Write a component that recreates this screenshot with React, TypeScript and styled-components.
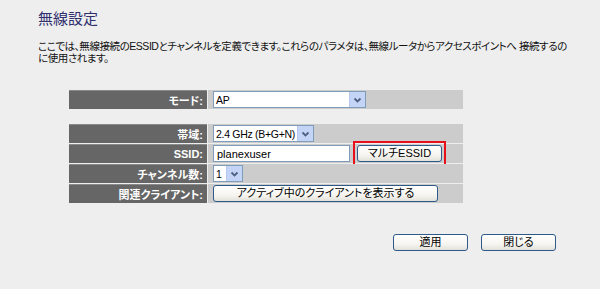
import * as React from "react";
import styled, { createGlobalStyle } from "styled-components";

const GlobalStyle = createGlobalStyle`
  html, body {
    margin: 0;
    padding: 0;
    background: #eeeeee;
  }
  body {
    font-family: "Liberation Sans", "Noto Sans CJK JP", sans-serif;
  }
`;

const jp = `"Liberation Sans", "Noto Sans CJK JP", sans-serif`;

const Page = styled.div`
  width: 600px;
  height: 289px;
  box-sizing: border-box;
  padding: 9px 40px 0 38px;
  overflow: hidden;
`;

const Title = styled.h1`
  margin: 0;
  font-family: ${jp};
  font-size: 15px;
  font-weight: normal;
  line-height: 20px;
  color: #2f2f6e;
`;

const Description = styled.p`
  margin: 11px 0 0;
  font-family: ${jp};
  font-size: 10.5px;
  line-height: 12px;
  color: #111;
  font-feature-settings: "palt";
  letter-spacing: -0.45px;
  white-space: nowrap;
`;

const FormTable = styled.div<{ top: number }>`
  margin: ${(p) => p.top}px 0 0 31px;
  width: 394px;
  display: flex;
  flex-direction: column;
  gap: 1px;
`;

const Row = styled.div`
  display: grid;
  grid-template-columns: 138px 255px;
  column-gap: 1px;
  height: 19px;
`;

const Label = styled.div`
  background: #666666;
  border-top: 1px solid #8a8a8a;
  color: #ffffff;
  font-family: ${jp};
  font-weight: bold;
  font-size: 11px;
  text-align: right;
  padding-right: 4px;
  display: flex;
  align-items: center;
  justify-content: flex-end;
  font-feature-settings: "palt";
`;

const Value = styled.div`
  background: #cccccc;
  display: flex;
  align-items: center;
  padding-left: 5px;
  gap: 7px;
`;

const SelectBox = styled.div<{ w: number }>`
  width: ${(p) => p.w}px;
  height: 17px;
  box-sizing: border-box;
  background: #ffffff;
  border: 1px solid #7f9db9;
  display: flex;
  align-items: center;
  font-family: "Liberation Sans", sans-serif;
  font-size: 10.5px;
  color: #000;
`;

const SelectText = styled.span`
  flex: 1;
  padding-left: 2px;
  letter-spacing: -0.3px;
  white-space: nowrap;
  overflow: hidden;
`;

const Arrow = styled.span`
  width: 15px;
  height: 15px;
  flex-shrink: 0;
  background: #c4d4f7;
  border-left: 1px solid #b6c8f0;
  display: flex;
  align-items: center;
  justify-content: center;
`;

const TextInput = styled.div`
  width: 137px;
  height: 17px;
  box-sizing: border-box;
  background: #fff;
  border: 1px solid #7f9db9;
  font-family: "Liberation Sans", sans-serif;
  font-size: 11px;
  padding-left: 3px;
  display: flex;
  align-items: center;
`;

const Marked = styled.span`
  display: flex;
  outline: 2px solid #e8101a;
  outline-offset: 2px;
`;

const Button = styled.button<{ w: number }>`
  width: ${(p) => p.w}px;
  height: 17px;
  box-sizing: border-box;
  padding: 0;
  border: 1px solid #2e5a8a;
  border-radius: 3px;
  background: linear-gradient(#ffffff, #f6f5f0 60%, #e2e1da);
  font-family: ${jp};
  font-size: 11px;
  color: #000;
  line-height: 15px;
  font-feature-settings: "palt";
`;

const Actions = styled.div`
  margin-top: 31px;
  padding-right: 4px;
  display: flex;
  justify-content: flex-end;
  gap: 13px;
`;

const Chevron = () => (
  <svg width="9" height="6" viewBox="0 0 9 6">
    <path d="M1.5 1.5 L4.5 4.5 L7.5 1.5" stroke="#4d6185" strokeWidth="1.8" fill="none" />
  </svg>
);

const Select = ({ w, value }: { w: number; value: string }) => (
  <SelectBox w={w}>
    <SelectText>{value}</SelectText>
    <Arrow>
      <Chevron />
    </Arrow>
  </SelectBox>
);

export default function App() {
  return (
    <Page>
      <GlobalStyle />
      <Title>無線設定</Title>
      <Description>
        ここでは、無線接続のESSIDとチャンネルを定義できます。これらのパラメタは、無線ルータからアクセスポイントへ 接続するの
        <br />
        に使用されます。
      </Description>
      <FormTable top={26}>
        <Row>
          <Label>モード:</Label>
          <Value>
            <Select w={153} value="AP" />
          </Value>
        </Row>
      </FormTable>
      <FormTable top={15}>
        <Row>
          <Label>帯域:</Label>
          <Value>
            <Select w={101} value="2.4 GHz (B+G+N)" />
          </Value>
        </Row>
        <Row>
          <Label>SSID:</Label>
          <Value>
            <TextInput>planexuser</TextInput>
            <Marked>
              <Button w={85}>マルチESSID</Button>
            </Marked>
          </Value>
        </Row>
        <Row>
          <Label>チャンネル数:</Label>
          <Value>
            <Select w={30} value="1" />
          </Value>
        </Row>
        <Row>
          <Label>関連クライアント:</Label>
          <Value>
            <Button w={225}>アクティブ中のクライアントを表示する</Button>
          </Value>
        </Row>
      </FormTable>
      <Actions>
        <Button w={75}>適用</Button>
        <Button w={75}>閉じる</Button>
      </Actions>
    </Page>
  );
}
